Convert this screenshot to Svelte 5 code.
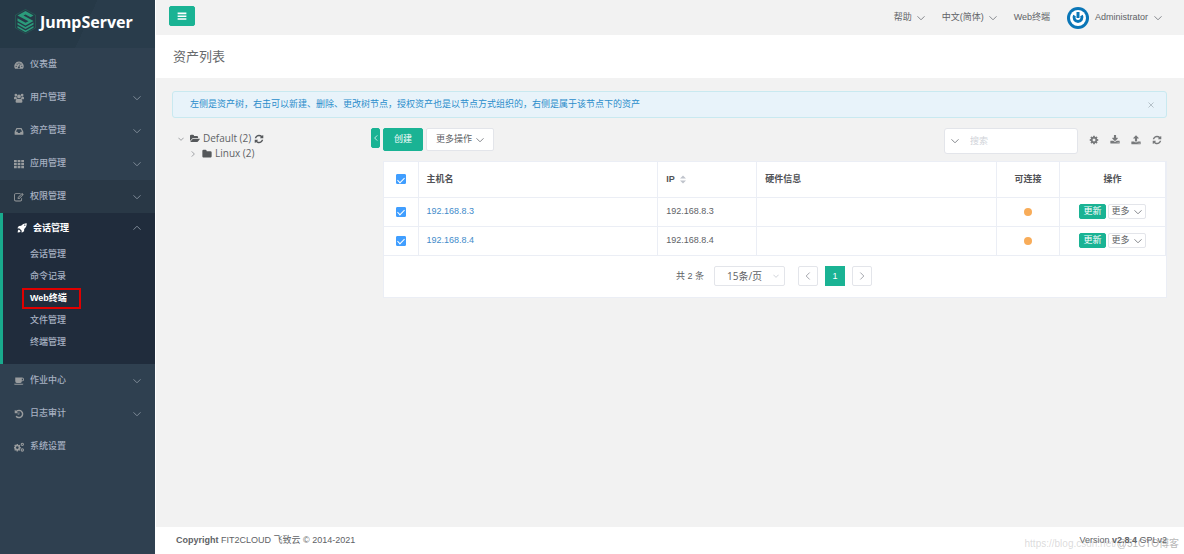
<script lang="ts">
	type MenuItem = { label: string; icon: string; expandable: boolean; hovered?: boolean };

	const topMenu: MenuItem[] = [
		{ label: '仪表盘', icon: 'dashboard', expandable: false },
		{ label: '用户管理', icon: 'users', expandable: true },
		{ label: '资产管理', icon: 'inbox', expandable: true },
		{ label: '应用管理', icon: 'th', expandable: true },
		{ label: '权限管理', icon: 'edit', expandable: true, hovered: true }
	];

	const bottomMenu: MenuItem[] = [
		{ label: '作业中心', icon: 'coffee', expandable: true },
		{ label: '日志审计', icon: 'history', expandable: true },
		{ label: '系统设置', icon: 'cogs', expandable: false }
	];

	const sessionMenu = ['会话管理', '命令记录', 'Web终端', '文件管理', '终端管理'];
	let current = $state('Web终端');

	let assets = $state([
		{ hostname: '192.168.8.3', ip: '192.168.8.3', hardware: '', checked: true },
		{ hostname: '192.168.8.4', ip: '192.168.8.4', hardware: '', checked: true }
	]);
	let allChecked = $derived(assets.every((a) => a.checked));

	let keyword = $state('');
	let showNotice = $state(true);
	let showTree = $state(true);

	function toggleAll() {
		const next = !allChecked;
		assets.forEach((a) => (a.checked = next));
	}

	const cog =
		'M1152 896q0-106-75-181t-181-75-181 75-75 181 75 181 181 75 181-75 75-181zm512-109v222q0 12-8 23t-20 13l-185 28q-19 54-39 91 35 50 107 138 10 12 10 25t-9 23q-27 37-99 108t-94 71q-12 0-26-9l-138-108q-44 23-91 38-16 136-29 186-7 28-36 28h-222q-14 0-24.5-8.5t-11.5-21.5l-28-184q-49-16-90-37l-141 107q-10 9-25 9-14 0-25-11-126-114-165-168-7-10-7-23 0-12 8-23 15-21 51-66.5t54-70.5q-27-50-41-99l-183-27q-13-2-21-12.5t-8-23.5v-222q0-12 8-23t19-13l186-28q14-46 39-92-40-57-107-138-10-12-10-24 0-10 9-23 26-36 98.5-107.5t94.5-71.5q13 0 26 10l138 107q44-23 91-38 16-136 29-186 7-28 36-28h222q14 0 24.5 8.5t11.5 21.5l28 184q49 16 90 37l142-107q9-9 24-9 13 0 25 10 129 119 165 170 7 8 7 22 0 12-8 23-15 21-51 66.5t-54 70.5q26 50 41 98l183 28q13 2 21 12.5t8 23.5z';

	// [viewBox size, path]
	const icons: Record<string, [number, string]> = {
		dashboard: [16, 'M8 2.500a7.500 7.500 0 0 0-6.300 11.600h12.600A7.500 7.500 0 0 0 8 2.500zM3.500 9a1 1 0 1 1 0 2 1 1 0 0 1 0-2zM5 5.500a1 1 0 1 1 0 2 1 1 0 0 1 0-2zM8 4a1 1 0 1 1 0 2 1 1 0 0 1 0-2zM11 5.500a1 1 0 1 1 0 2 1 1 0 0 1 0-2zM12.500 9a1 1 0 1 1 0 2 1 1 0 0 1 0-2zM8.400 7.200l.8.2-.6 3a1.500 1.500 0 1 1-1-.2z'],
		users: [16, 'M3 1a2.200 2.200 0 1 1 0 4.400A2.200 2.200 0 0 1 3 1zM13 1a2.200 2.200 0 1 1 0 4.400A2.200 2.200 0 0 1 13 1zM8 2.500a3 3 0 1 1 0 6 3 3 0 0 1 0-6zM0 9V7.500Q.3 6 1.300 6H4q0 2 1 3-1.500 0-2.300 1H1Q0 10 0 9zM16 9V7.500Q15.700 6 14.700 6H12q0 2-1 3 1.500 0 2.300 1H15q1 0 1-1zM2.500 13.500Q2.500 9 5 9q3 1.500 6 0 2.500 0 2.500 4.500 0 2-2 2h-7q-2 0-2-2z'],
		inbox: [16, 'M4 3h8l3 6v4q0 1-1 1H2q-1 0-1-1V9zM5 5L3.200 9H5.500l1 2h3l1-2h2.300L11 5z'],
		th: [16, 'M0 1.500h4.400v3.500H0zM5.800 1.500h4.400v3.500H5.800zM11.600 1.500H16v3.500h-4.400zM0 6.300h4.400v3.500H0zM5.800 6.300h4.400v3.500H5.800zM11.600 6.300H16v3.500h-4.400zM0 11.100h4.400v3.500H0zM5.800 11.100h4.400v3.500H5.800zM11.600 11.100H16v3.500h-4.400z'],
		edit: [16, 'M3 2h8l-1.200 1.200H3Q1.400 3.200 1.400 5v7Q1.400 13.600 3 13.600h7q1.600 0 1.600-1.600v-1.500l1.300-1.300V12q0 3-2.900 3H3q-3 0-3-3V5q0-3 3-3zM13 1.500L15.500 4 8.500 11H6V8.500zM7 9v1h1l5.500-5.500-1-1z'],
		rocket: [16, 'M15.500.500Q9.500.2 6.500 4.500L3 4.700.500 8.500l3.500.2L7.300 12l.2 3.500 3.800-2.500.2-3.500Q15.800 6.500 15.500.500zM12.500 2.500a1 1 0 1 1 0 2 1 1 0 0 1 0-2zM3 10.200Q1 11 1 15q4 0 4.800-2z'],
		coffee: [16, 'M2 2.500h11q3 0 3 3t-3 3h-.5Q12.500 11 10 11H4.500Q2 11 2 8.500zM12.500 4v3h.5q1.500 0 1.500-1.500T13 4zM0 12.500h15Q15 14 13 14H2Q0 14 0 12.500z'],
		history: [1792, 'M1664 896q0 156-61 298t-164 245-245 164-298 61q-172 0-327-72.5t-264-204.5q-7-10-6.5-22.5t8.5-20.5l137-138q10-9 25-9 16 2 23 12 73 95 179 147t225 52q104 0 198.5-40.5t163.5-109.5 109.5-163.5 40.5-198.5-40.5-198.5-109.5-163.5-163.5-109.5-198.5-40.5q-98 0-188 35.5t-160 101.5l137 138q31 30 14 69-17 40-59 40h-448q-26 0-45-19t-19-45v-448q0-42 40-59 39-17 69 14l130 129q107-101 244.5-156.5t284.5-55.5q156 0 298 61t245 164 164 245 61 298zM832 600h128v380h-320v-128h192z'],
		cogs: [16, 'M4.300 3h2l.3 1.500 1 .5 1.300-.8 1.300 1.300-.8 1.300.4 1.100 1.200.3v2l-1.300.3-.5 1.100.8 1.300-1.300 1.200-1.300-.8-1 .5-.3 1.200h-2L4 13.700l-1-.5-1.200.8L.500 12.700l.7-1.200-.5-1.200L0 10V8l.8-.2.5-1.200L.500 5.300 1.800 4l1.200.8 1-.5zM5.300 6.800a2.100 2.100 0 1 0 0 4.200 2.100 2.100 0 0 0 0-4.200zM13.300 1a2.700 2.700 0 1 1 0 5.400 2.700 2.700 0 0 1 0-5.400zM13.300 2.700a1 1 0 1 0 0 2 1 1 0 0 0 0-2zM13.300 10a2.700 2.700 0 1 1 0 5.400 2.700 2.700 0 0 1 0-5.400zM13.300 11.700a1 1 0 1 0 0 2 1 1 0 0 0 0-2z'],
		bars: [16, 'M1 2.500h14v2.500H1zM1 7h14v2.500H1zM1 11.500h14V14H1z'],
		folder: [1792, 'M1728 608v704q0 92-66 158t-158 66h-1216q-92 0-158-66t-66-158v-960q0-92 66-158t158-66h320q92 0 158 66t66 158v32h672q92 0 158 66t66 158z'],
		folderOpen: [1900, 'M1879 952q0 31-31 66l-336 396q-43 51-120.5 86.5t-143.5 35.5h-1088q-34 0-60.5-13t-26.5-43q0-31 31-66l336-396q43-51 120.5-86.5t143.5-35.5h1088q34 0 60.5 13t26.5 43zm-343-344v160h-832q-94 0-197 47.5t-164 119.5l-337 396-5 6q0-4-.5-12.5t-.5-12.5v-960q0-92 66-158t158-66h320q92 0 158 66t66 158v32h544q92 0 158 66t66 158z'],
		cog: [1792, cog],
		download: [1792, 'M1344 1344q0-26-19-45t-45-19-45 19-19 45 19 45 45 19 45-19 19-45zm256 0q0-26-19-45t-45-19-45 19-19 45 19 45 45 19 45-19 19-45zm128-224v320q0 40-28 68t-68 28h-1472q-40 0-68-28t-28-68v-320q0-40 28-68t68-28h465l135 136q58 56 136 56t136-56l136-136h464q40 0 68 28t28 68zm-325-569q17 41-14 70l-448 448q-18 19-45 19t-45-19l-448-448q-31-29-14-70 17-39 59-39h256v-448q0-26 19-45t45-19h256q26 0 45 19t19 45v448h256q42 0 59 39z'],
		upload: [1792, 'M1344 1472q0-26-19-45t-45-19-45 19-19 45 19 45 45 19 45-19 19-45zm256 0q0-26-19-45t-45-19-45 19-19 45 19 45 45 19 45-19 19-45zm128-224v320q0 40-28 68t-68 28h-1472q-40 0-68-28t-28-68v-320q0-40 28-68t68-28h427q21 56 70.5 92t110.5 36h256q61 0 110.5-36t70.5-92h427q40 0 68 28t28 68zm-325-648q-17 40-59 40h-256v448q0 26-19 45t-45 19h-256q-26 0-45-19t-19-45v-448h-256q-42 0-59-40-17-39 14-69l448-448q18-19 45-19t45 19l448 448q31 30 14 69z'],
		refresh: [1792, 'M1639 1056q0 5-1 7-64 268-268 434.5t-478 166.5q-146 0-282.5-55t-243.5-157l-129 129q-19 19-45 19t-45-19-19-45v-448q0-26 19-45t45-19h448q26 0 45 19t19 45-19 45l-137 137q71 66 161 102t187 36q134 0 250-65t186-179q11-17 53-117 8-23 30-23h192q13 0 22.5 9.5t9.5 22.5zm25-800v448q0 26-19 45t-45 19h-448q-26 0-45-19t-19-45 19-45l138-138q-148-137-349-137-134 0-250 65t-186 179q-11 17-53 117-8 23-30 23h-199q-13 0-22.5-9.5t-9.5-22.5v-7q65-268 270-434.5t480-166.5q146 0 284 55.5t245 156.5l130-129q19-19 45-19t45 19 19 45z']
	};

	const tools = [
		{ icon: 'cog', label: '设置' },
		{ icon: 'download', label: '导出' },
		{ icon: 'upload', label: '导入' },
		{ icon: 'refresh', label: '刷新' }
	];
</script>

{#snippet icon(name: string)}
	<svg class="icon" viewBox="0 0 {icons[name][0]} {icons[name][0]}" aria-hidden="true">
		<path fill-rule="evenodd" d={icons[name][1]} />
	</svg>
{/snippet}

{#snippet chevron(dir: string)}
	<svg class="chevron {dir}" viewBox="0 0 8 8" aria-hidden="true"><path d="M.5 2.300L4 5.800l3.500-3.500" /></svg>
{/snippet}

{#snippet menuRow(item: MenuItem)}
	<li>
		<a href="#menu" class="menu-link" class:hovered={item.hovered}>
			{@render icon(item.icon)}
			<span class="menu-label">{item.label}</span>
			{#if item.expandable}{@render chevron('down')}{/if}
		</a>
	</li>
{/snippet}

<div class="layout">
	<aside class="sidebar">
		<a href="#home" class="logo">
			<svg class="logo-mark" viewBox="0 0 42 50" aria-hidden="true">
				<path class="logo-outline" d="M21 1L41 12v26L21 49 1 38V12z" />
				<path class="logo-fill" d="M21 4l16 9-6 3.500-10-5.500-4 2.200 20 11-16 9-16-9v-5.500l16 9 6-3.300L5 13z" />
				<path class="logo-fill" d="M5 27l16 9 16-9v4l-16 9-16-9zM5 34l16 9 16-9v3.500l-16 9-16-9z" />
			</svg>
			<span>JumpServer</span>
		</a>
		<nav>
			<ul class="menu">
				{#each topMenu as item}
					{@render menuRow(item)}
				{/each}
				<li class="opened">
					<a href="#session" class="menu-link">
						{@render icon('rocket')}
						<span class="menu-label">会话管理</span>
						{@render chevron('up')}
					</a>
					<ul class="submenu">
						{#each sessionMenu as name}
							<li>
								<a href="#sub" class:current={current === name} onclick={() => (current = name)}>{name}</a>
							</li>
						{/each}
					</ul>
				</li>
				{#each bottomMenu as item}
					{@render menuRow(item)}
				{/each}
			</ul>
		</nav>
	</aside>

	<div class="page">
		<header class="topbar">
			<button class="btn primary toggle" aria-label="菜单">{@render icon('bars')}</button>
			<div class="top-links">
				<button class="link-btn">帮助 {@render chevron('down')}</button>
				<button class="link-btn">中文(简体) {@render chevron('down')}</button>
				<a href="#terminal" class="link-btn">Web终端</a>
				<button class="link-btn user">
					<svg class="avatar" viewBox="0 0 22 22" aria-hidden="true">
						<circle cx="11" cy="11" r="11" fill="#0a76b7" />
						<circle cx="11" cy="11" r="8" fill="#fff" />
						<path d="M7.500 8.500a4 4 0 1 0 7 0" fill="none" stroke="#0a76b7" stroke-width="3" />
						<path d="M11 5v6" stroke="#0a76b7" stroke-width="3" />
					</svg>
					<span>Administrator</span>
					{@render chevron('down')}
				</button>
			</div>
		</header>

		<div class="heading"><h1>资产列表</h1></div>

		<main>
			{#if showNotice}
				<div class="notice">
					<p>左侧是资产树，右击可以新建、删除、更改树节点，授权资产也是以节点方式组织的，右侧是属于该节点下的资产</p>
					<button class="close" aria-label="关闭" onclick={() => (showNotice = false)}>
						<svg viewBox="0 0 8 8" aria-hidden="true"><path d="M1.500 1.500l5 5M6.500 1.500l-5 5" /></svg>
					</button>
				</div>
			{/if}

			<div class="columns">
				{#if showTree}
					<ul class="tree">
						<li>
							<div class="node">
								{@render chevron('down')}
								{@render icon('folderOpen')}
								<span>Default (2)</span>
								{@render icon('refresh')}
							</div>
							<ul>
								<li>
									<div class="node">
										{@render chevron('right')}
										{@render icon('folder')}
										<span>Linux (2)</span>
									</div>
								</li>
							</ul>
						</li>
					</ul>
				{/if}

				<button class="btn primary collapse" aria-label="收起" onclick={() => (showTree = !showTree)}>
					{@render chevron('left')}
				</button>

				<section class="assets">
					<div class="toolbar">
						<button class="btn primary create">创建</button>
						<button class="btn more">更多操作 {@render chevron('down')}</button>
						<label class="search">
							{@render chevron('down')}
							<input type="text" placeholder="搜索" aria-label="搜索" bind:value={keyword} />
						</label>
						<div class="tools">
							{#each tools as tool}
								<button aria-label={tool.label}>{@render icon(tool.icon)}</button>
							{/each}
						</div>
					</div>

					<div class="card">
						<table>
							<colgroup>
								<col class="c-check" />
								<col />
								<col class="c-ip" />
								<col />
								<col class="c-conn" />
								<col class="c-action" />
							</colgroup>
							<thead>
								<tr>
									<th class="center"><input type="checkbox" aria-label="全选" checked={allChecked} onchange={toggleAll} /></th>
									<th>主机名</th>
									<th>
										<span class="sortable">
											IP
											<svg class="sort" viewBox="0 0 6 9" aria-hidden="true"><path d="M0 3.500L3 .5l3 3zM0 5.500h6l-3 3z" /></svg>
										</span>
									</th>
									<th>硬件信息</th>
									<th class="center">可连接</th>
									<th class="center">操作</th>
								</tr>
							</thead>
							<tbody>
								{#each assets as asset}
									<tr>
										<td class="center"><input type="checkbox" aria-label={asset.hostname} bind:checked={asset.checked} /></td>
										<td><a href="#asset">{asset.hostname}</a></td>
										<td>{asset.ip}</td>
										<td>{asset.hardware}</td>
										<td class="center"><span class="dot"></span></td>
										<td>
											<div class="actions">
												<button class="btn primary mini">更新</button>
												<button class="btn mini">更多 {@render chevron('down')}</button>
											</div>
										</td>
									</tr>
								{/each}
							</tbody>
						</table>

						<div class="pagination">
							<span class="total">共 2 条</span>
							<div class="page-size">
								<select aria-label="每页条数">
									<option>15条/页</option>
									<option>30条/页</option>
									<option>50条/页</option>
								</select>
								{@render chevron('down')}
							</div>
							<button class="btn pager" aria-label="上一页">{@render chevron('left')}</button>
							<button class="btn primary pager">1</button>
							<button class="btn pager" aria-label="下一页">{@render chevron('right')}</button>
						</div>
					</div>
				</section>
			</div>
		</main>

		<footer>
			<span><strong>Copyright</strong> FIT2CLOUD 飞致云 © 2014-2021</span>
			<span>Version <strong>v2.8.4</strong> GPLv2</span>
			<div class="watermark">
				<span>https://blog.csdn.net/</span>
				<span class="mark">@51CTO博客</span>
			</div>
		</footer>
	</div>
</div>

<style>
	:global(body) {
		background: #f2f2f2;
	}

	.layout {
		display: flex;
		min-height: 100vh;
		font-family: 'Liberation Sans', 'Noto Sans CJK SC', sans-serif;
		font-size: 9px;
		line-height: 13px;
		color: #606266;
	}

	.layout * {
		box-sizing: border-box;
	}

	button,
	input,
	select {
		font: inherit;
		color: inherit;
		margin: 0;
	}

	button {
		cursor: pointer;
	}

	ul {
		list-style: none;
		margin: 0;
		padding: 0;
	}

	a {
		text-decoration: none;
		color: #428bca;
	}

	.icon {
		display: block;
		flex: none;
		width: 10px;
		height: 10px;
		fill: currentColor;
	}

	.chevron {
		display: block;
		flex: none;
		width: 8px;
		height: 8px;
		fill: none;
		stroke: #85888d;
	}

	.chevron.up {
		transform: rotate(180deg);
	}

	.chevron.left {
		transform: rotate(90deg);
	}

	.chevron.right {
		transform: rotate(-90deg);
	}

	/* sidebar */
	.sidebar {
		flex: none;
		width: 155px;
		background: #2f4050;
	}

	.logo {
		display: flex;
		align-items: center;
		gap: 4px;
		height: 48px;
		padding: 0 0 5px 15px;
		background: linear-gradient(115deg, #263947 55%, #293c4b 55%);
		color: #fff;
		font: bold 16px/24px 'Noto Sans', sans-serif;
	}

	.logo-mark {
		width: 21px;
		height: 25px;
	}

	.logo-outline {
		fill: none;
		stroke: #24735f;
	}

	.logo-fill {
		fill: #2b9b7b;
	}

	.menu-link {
		display: flex;
		align-items: center;
		height: 33px;
		padding: 0 14px;
		color: #a7b1c2;
	}

	.menu-link .icon {
		color: #999c9e;
	}

	.menu-link.hovered {
		background: #293846;
	}

	.menu-label {
		flex: 1;
		margin-left: 6px;
		font-weight: 500;
	}

	.menu-link .chevron {
		stroke: #7f8b98;
	}

	.opened {
		padding-bottom: 11px;
		border-left: 3px solid #19aa8d;
		background: #202c3c;
	}

	.opened .menu-link {
		height: 30px;
		color: #fff;
	}

	.opened .menu-link .icon {
		color: #fff;
	}

	.opened .menu-label {
		font-weight: bold;
	}

	.submenu li {
		display: flex;
		align-items: center;
		height: 22px;
		padding-left: 19px;
	}

	.submenu a {
		padding: 2px 9px 2px 6px;
		border: 2px solid transparent;
		color: #a7b1c2;
		font-weight: 500;
	}

	.submenu a.current {
		padding-right: 12px;
		border-color: #e00000;
		color: #fff;
		font-weight: bold;
	}

	/* header */
	.page {
		flex: 1;
		min-width: 0;
		display: flex;
		flex-direction: column;
		border-left: 1px solid #fff;
		background: #f2f2f2;
	}

	.topbar {
		display: flex;
		align-items: center;
		justify-content: space-between;
		height: 35px;
		padding: 0 22px 0 13px;
	}

	.btn {
		display: inline-flex;
		align-items: center;
		justify-content: center;
		border: 1px solid #e3e5ea;
		border-radius: 2px;
		padding: 0;
		background: #fff;
	}

	.btn.primary {
		border-color: #1ab394;
		background: #1ab394;
		color: #fff;
	}

	.toggle {
		width: 26px;
		height: 20px;
		margin-bottom: 3px;
	}

	.top-links {
		display: flex;
		align-items: center;
		gap: 17px;
	}

	.link-btn {
		display: flex;
		align-items: center;
		gap: 5px;
		border: 0;
		padding: 0;
		background: none;
		color: #606266;
	}

	.user {
		gap: 6px;
	}

	.avatar {
		width: 22px;
		height: 22px;
	}

	.heading {
		display: flex;
		align-items: center;
		height: 43px;
		padding: 0 17px;
		background: #fff;
	}

	h1 {
		margin: 0;
		font-size: 13px;
		line-height: 18px;
		font-weight: normal;
		color: #676a6c;
	}

	/* content */
	main {
		flex: 1;
		padding: 13px 17px 13px 16px;
	}

	.notice {
		display: flex;
		align-items: center;
		justify-content: space-between;
		min-height: 27px;
		padding: 0 11px 0 17px;
		border: 1px solid #c9e9f0;
		border-radius: 3px;
		background: #e8f3fa;
		color: #2a8dcb;
	}

	.notice p {
		margin: 0;
	}

	.close {
		border: 0;
		padding: 0;
		background: none;
	}

	.close svg {
		display: block;
		width: 8px;
		height: 8px;
		stroke: #b5c1c9;
	}

	.columns {
		display: flex;
		align-items: flex-start;
		margin-top: 10px;
	}

	.tree {
		flex: none;
		width: 199px;
		padding: 3px 0 0 6px;
		font-family: 'Open Sans', 'Noto Sans CJK SC', sans-serif;
		font-size: 10px;
		color: #606266;
	}

	.tree ul {
		padding-left: 12px;
	}

	.node {
		display: flex;
		align-items: center;
		gap: 3px;
		height: 15px;
	}

	.node .chevron {
		width: 6px;
		height: 6px;
		margin-right: 3px;
	}

	.node .icon {
		color: #55585b;
	}

	.collapse {
		flex: none;
		width: 9px;
		height: 20px;
		margin-right: 3px;
	}

	.collapse .chevron {
		width: 6px;
		height: 6px;
		stroke: #fff;
	}

	.assets {
		flex: 1;
		min-width: 0;
	}

	.toolbar {
		display: flex;
		align-items: flex-start;
	}

	.create {
		width: 40px;
		height: 23px;
	}

	.more {
		width: 68px;
		height: 23px;
		gap: 4px;
		margin-left: 3px;
	}

	.search {
		display: flex;
		align-items: center;
		gap: 11px;
		width: 134px;
		height: 26px;
		margin-left: auto;
		padding: 0 6px;
		border: 1px solid #e3e5ea;
		border-radius: 3px;
		background: #fff;
	}

	.search input {
		flex: 1;
		min-width: 0;
		border: 0;
		outline: 0;
		padding: 0;
		background: none;
	}

	.search input::placeholder {
		color: #d0d3d9;
	}

	.tools {
		display: flex;
		align-items: center;
		gap: 11px;
		height: 23px;
		padding: 0 5px 0 11px;
	}

	.tools button {
		border: 0;
		padding: 0;
		background: none;
		color: #77797b;
	}

	/* table */
	.card {
		margin-top: 7px;
		border: 1px solid #ebeef5;
		background: #fff;
	}

	table {
		width: 100%;
		table-layout: fixed;
		border-collapse: collapse;
	}

	.c-check {
		width: 34px;
	}

	.c-ip {
		width: 99px;
	}

	.c-conn {
		width: 63px;
	}

	.c-action {
		width: 106px;
	}

	th,
	td {
		height: 29px;
		padding: 0 8px;
		border-right: 1px solid #ebeef5;
		border-bottom: 1px solid #ebeef5;
		text-align: left;
	}

	th {
		height: 35px;
		color: #515256;
		font-weight: bold;
	}

	.center {
		text-align: center;
	}

	input[type='checkbox'] {
		appearance: none;
		display: grid;
		place-items: center;
		width: 10px;
		height: 10px;
		margin: 0 auto;
		border: 1px solid #dcdfe6;
		border-radius: 1px;
		background: #fff;
	}

	input[type='checkbox']:checked {
		border-color: #409eff;
		background: #409eff;
	}

	input[type='checkbox']:checked::after {
		content: '';
		width: 3px;
		height: 6px;
		border: solid #fff;
		border-width: 0 1px 1px 0;
		transform: rotate(45deg);
	}

	.sortable {
		display: flex;
		align-items: center;
		gap: 5px;
	}

	.sort {
		width: 6px;
		height: 9px;
		fill: #c0c4cc;
	}

	.dot {
		display: block;
		width: 8px;
		height: 8px;
		margin: 0 auto;
		border-radius: 50%;
		background: #f8ac59;
	}

	.actions {
		display: flex;
		justify-content: center;
		gap: 2px;
	}

	.mini {
		height: 15px;
		padding: 0 3px;
		gap: 4px;
	}

	/* pagination */
	.pagination {
		display: flex;
		align-items: center;
		justify-content: center;
		height: 41px;
		padding-right: 2px;
	}

	.page-size {
		display: grid;
		align-items: center;
		width: 71px;
		margin: 0 13px 0 10px;
	}

	.page-size select {
		grid-area: 1 / 1;
		appearance: none;
		height: 20px;
		padding: 0 12px;
		border: 1px solid #e3e5ea;
		border-radius: 2px;
		background: #fff;
		font-family: 'Open Sans', 'Noto Sans CJK SC', sans-serif;
		font-size: 10px;
	}

	.page-size .chevron {
		grid-area: 1 / 1;
		justify-self: end;
		width: 6px;
		height: 6px;
		margin-right: 6px;
		stroke: #c0c4cc;
		pointer-events: none;
	}

	.pager {
		width: 20px;
		height: 20px;
	}

	.pager.primary {
		border-radius: 0;
	}

	.pager + .pager {
		margin-left: 7px;
	}

	.pager .chevron {
		stroke: #a4a7ad;
	}

	/* footer */
	footer {
		position: relative;
		display: flex;
		align-items: center;
		justify-content: space-between;
		height: 27px;
		padding: 0 17px 0 20px;
		background: #fff;
	}

	.watermark {
		position: absolute;
		right: 5px;
		bottom: 4px;
		display: flex;
		font-size: 10px;
		color: rgba(150, 150, 150, 0.35);
		pointer-events: none;
	}

	.watermark .mark {
		color: rgba(120, 120, 120, 0.55);
	}
</style>
